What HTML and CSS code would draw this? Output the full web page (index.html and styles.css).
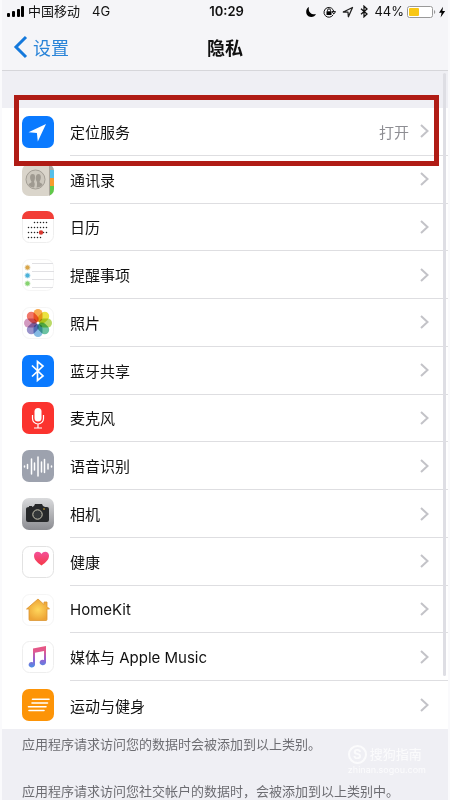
FILE: index.html
```html
<!DOCTYPE html>
<html lang="zh-CN">
<head>
    <meta charset="UTF-8">
    <meta name="viewport" content="width=device-width, initial-scale=1.0">
    <title>隐私</title>
    <link rel="stylesheet" href="styles.css">
</head>
<body>
    <svg class="defs" width="0" height="0">
        <symbol id="chevron" viewBox="0 0 9 14"><path d="M1 1l6.5 6L1 13"/></symbol>
    </svg>

    <div class="screen">
        <header class="header">
            <div class="status-bar">
                <div class="status-left">
                    <svg class="signal" width="18" height="11" viewBox="0 0 18 11">
                        <rect x="0" y="7" width="3" height="4" rx="1"/>
                        <rect x="5" y="5" width="3" height="6" rx="1"/>
                        <rect x="10" y="3" width="3" height="8" rx="1"/>
                        <rect x="14" y="0" width="3" height="11" rx="1"/>
                    </svg>
                    <span>中国移动</span>
                    <span class="network">4G</span>
                </div>
                <time class="clock">10:29</time>
                <div class="status-right">
                    <svg width="12" height="12" viewBox="0 0 12 12">
                        <path d="M4 1C-.3 3 .3 10.900 6.200 11c2.200 0 4-1.200 4.800-3C6.500 9.300 2.600 5.600 4 1z"/>
                    </svg>
                    <svg width="13" height="12" viewBox="0 0 13 12" class="lock">
                        <path d="M10.200 8.700a4.900 4.900 0 1 1 .6-2.700M9 5.600h3.600L10.800 8z" fill="none" stroke="#111"/>
                        <rect x="3.500" y="5.300" width="5" height="3.700"/>
                        <path d="M4.500 5.500V4.300a1.500 1.500 0 0 1 3 0v1.200" fill="none" stroke="#111"/>
                    </svg>
                    <svg width="12" height="12" viewBox="0 0 12 12">
                        <path d="M1.300 6L10.500 1.500 6.400 10.700 6 6.200z" fill="none" stroke="#222" stroke-width="1.300" stroke-linejoin="round"/>
                    </svg>
                    <svg width="8" height="13" viewBox="0 0 8 13">
                        <path d="M1 3.700l6 5.300-3 2.800V1.200L7 4 1 9.300" fill="none" stroke="#111" stroke-width="1.300"/>
                    </svg>
                    <span class="percent">44%</span>
                    <svg width="29" height="12" viewBox="0 0 29 12">
                        <rect x=".5" y=".5" width="25" height="11" rx="2" fill="#fff" stroke="#999"/>
                        <rect x="2" y="2" width="10" height="8" rx="1" fill="#f9c714"/>
                        <path d="M27 4v4a2.200 2.200 0 0 0 0-4z" fill="#999"/>
                    </svg>
                    <svg width="8" height="12" viewBox="0 0 8 12">
                        <path d="M5 .8L1 6.800h2.600L2.600 11.500 7.200 5H4.400z"/>
                    </svg>
                </div>
            </div>
            <nav class="nav">
                <a class="back" href="#">
                    <svg width="15" height="24" viewBox="0 0 15 24">
                        <path d="M13 2L3 12l10 10" fill="none" stroke="#1479dc" stroke-width="3"/>
                    </svg>
                    设置
                </a>
                <h1>隐私</h1>
            </nav>
        </header>

        <main class="content">
            <ul class="list">
                <li class="row highlighted">
                    <a href="#">
                        <svg class="icon" viewBox="0 0 32 32">
                            <rect width="32" height="32" rx="7" fill="#0a7aff"/>
                            <path d="M6.500 16.300L24 8l-8.200 17.500-.9-8.400z" fill="#fff"/>
                        </svg>
                        <span class="cell"><span>定位服务</span><span class="value">打开</span><svg class="chevron"><use href="#chevron"/></svg></span>
                    </a>
                </li>
                <li class="row">
                    <a href="#">
                        <svg class="icon" viewBox="0 0 32 32">
                            <defs><clipPath id="tile"><rect width="32" height="32" rx="7"/></clipPath></defs>
                            <g clip-path="url(#tile)">
                                <rect width="32" height="32" fill="#dad5cb"/>
                                <path d="M28 0h4v9h-4z" fill="#a9aba8"/>
                                <path d="M28 6h4v8h-4z" fill="#55bfe9"/>
                                <path d="M28 14h4v8h-4z" fill="#f79b2c"/>
                                <path d="M28 22h4v10h-4z" fill="#60c949"/>
                                <path d="M27.500 0v32" stroke="#aaa59c"/>
                                <circle cx="13.500" cy="15.500" r="9.500" fill="#cdc8be" stroke="#a39e95"/>
                                <path d="M6.500 20.500c1-1.500 3-1.500 3-3-2-2.500-2-7.500 1-7.500 2 0 2.500 1 2.500 3 0 3-1 4-1 5 1 1 1 3 0 5.500-2.500 0-4.500-1-5.500-3zM14.500 23.500c.8-2 .5-4 .5-5.500-2-3-1.500-8 1.500-8s3 5 1 7.500c0 1.500 2 1.500 3 3-1 2-3 3-6 3z" fill="#9f9a91"/>
                            </g>
                        </svg>
                        <span class="cell"><span>通讯录</span><svg class="chevron"><use href="#chevron"/></svg></span>
                    </a>
                </li>
                <li class="row">
                    <a href="#">
                        <svg class="icon" viewBox="0 0 32 32">
                            <rect x=".5" y=".5" width="31" height="31" rx="7" fill="#fff" stroke="#eee"/>
                            <path d="M0 8V7a7 7 0 0 1 7-7h18a7 7 0 0 1 7 7v1z" fill="#f23e37"/>
                            <g fill="none" stroke="#222" stroke-width="1.500" stroke-linecap="round" stroke-dasharray="0 3">
                                <path d="M12.500 11.500h13M6.500 16.500h19.500M6.500 21.500h19.500M6.500 26.500h13"/>
                            </g>
                            <circle cx="19" cy="21.500" r="2.200" fill="#d9382f"/>
                        </svg>
                        <span class="cell"><span>日历</span><svg class="chevron"><use href="#chevron"/></svg></span>
                    </a>
                </li>
                <li class="row">
                    <a href="#">
                        <svg class="icon" viewBox="0 0 32 32">
                            <rect x=".5" y=".5" width="31" height="31" rx="7" fill="#fff" stroke="#f5f5f5"/>
                            <path d="M10 4.500h21M10 12.500h22M10 20.500h22M10 28.500h21" stroke="#e0e0e3"/>
                            <circle cx="5.500" cy="8.500" r="2.500" fill="#d9a548" stroke="#ead9b8"/>
                            <circle cx="5.500" cy="16.500" r="2.500" fill="#4cb2d9" stroke="#b4deed"/>
                            <circle cx="5.500" cy="24.500" r="2.500" fill="#86d370" stroke="#c9ebc0"/>
                        </svg>
                        <span class="cell"><span>提醒事项</span><svg class="chevron"><use href="#chevron"/></svg></span>
                    </a>
                </li>
                <li class="row">
                    <a href="#">
                        <svg class="icon" viewBox="0 0 32 32">
                            <rect x=".5" y=".5" width="31" height="31" rx="7" fill="#fff" stroke="#f5f5f5"/>
                            <g class="petals">
                                <rect x="11.500" y="2" width="9" height="13" rx="4.500" fill="#f7a13d"/>
                                <rect x="11.500" y="2" width="9" height="13" rx="4.500" fill="#e8e02c" transform="rotate(45 16 16)"/>
                                <rect x="11.500" y="2" width="9" height="13" rx="4.500" fill="#b3d656" transform="rotate(90 16 16)"/>
                                <rect x="11.500" y="2" width="9" height="13" rx="4.500" fill="#5cbd98" transform="rotate(135 16 16)"/>
                                <rect x="11.500" y="2" width="9" height="13" rx="4.500" fill="#76b3e0" transform="rotate(180 16 16)"/>
                                <rect x="11.500" y="2" width="9" height="13" rx="4.500" fill="#8f88c6" transform="rotate(225 16 16)"/>
                                <rect x="11.500" y="2" width="9" height="13" rx="4.500" fill="#cf8fb9" transform="rotate(270 16 16)"/>
                                <rect x="11.500" y="2" width="9" height="13" rx="4.500" fill="#f0685a" transform="rotate(315 16 16)"/>
                            </g>
                            <circle cx="16" cy="16" r="1.300" fill="#fff"/>
                        </svg>
                        <span class="cell"><span>照片</span><svg class="chevron"><use href="#chevron"/></svg></span>
                    </a>
                </li>
                <li class="row">
                    <a href="#">
                        <svg class="icon" viewBox="0 0 32 32">
                            <rect width="32" height="32" rx="7" fill="#0a7aff"/>
                            <path d="M10 10.500l11 10.500-5.500 4.500v-19L21 11 10 21.500" fill="none" stroke="#fff" stroke-width="1.700"/>
                        </svg>
                        <span class="cell"><span>蓝牙共享</span><svg class="chevron"><use href="#chevron"/></svg></span>
                    </a>
                </li>
                <li class="row">
                    <a href="#">
                        <svg class="icon" viewBox="0 0 32 32">
                            <rect width="32" height="32" rx="7" fill="#fb332e"/>
                            <rect x="12.500" y="6" width="7" height="13.500" rx="3.500" fill="#fff"/>
                            <path d="M10.500 13v3.500a5.500 5.500 0 0 0 11 0V13M16 22v4M12 26h8" fill="none" stroke="#fff" stroke-width="1.200"/>
                        </svg>
                        <span class="cell"><span>麦克风</span><svg class="chevron"><use href="#chevron"/></svg></span>
                    </a>
                </li>
                <li class="row">
                    <a href="#">
                        <svg class="icon" viewBox="0 0 32 32">
                            <rect width="32" height="32" rx="7" fill="#9da2ae"/>
                            <path d="M2.500 16v1M5.500 14.500v4M9.500 9v15M12.500 13v7M16 7v19M19.500 12v10M22.500 9.500v13M26 14v5M29.500 16v1" stroke="#fff" stroke-width="1.500" stroke-linecap="round"/>
                        </svg>
                        <span class="cell"><span>语音识别</span><svg class="chevron"><use href="#chevron"/></svg></span>
                    </a>
                </li>
                <li class="row">
                    <a href="#">
                        <svg class="icon" viewBox="0 0 32 32">
                            <defs>
                                <linearGradient id="metal" x1="0" y1="0" x2="0" y2="1">
                                    <stop offset="0" stop-color="#dadbdd"/>
                                    <stop offset="1" stop-color="#8b8c91"/>
                                </linearGradient>
                            </defs>
                            <rect width="32" height="32" rx="7" fill="url(#metal)"/>
                            <path d="M4 11q0-2 3-2V8h3v1l2-1 1-2h7l1 2 2 1h2q2 0 2 2v11q0 2-2 2H6q-2 0-2-2z" fill="#26282a"/>
                            <circle cx="15.500" cy="16.500" r="4.700" fill="#333638" stroke="#cbc7b4"/>
                            <circle cx="22" cy="11" r=".8" fill="#e6b936"/>
                        </svg>
                        <span class="cell"><span>相机</span><svg class="chevron"><use href="#chevron"/></svg></span>
                    </a>
                </li>
                <li class="row">
                    <a href="#">
                        <svg class="icon" viewBox="0 0 32 32">
                            <defs>
                                <linearGradient id="heart" x1="0" y1="0" x2="0" y2="1">
                                    <stop offset="0" stop-color="#f4509a"/>
                                    <stop offset="1" stop-color="#f53846"/>
                                </linearGradient>
                            </defs>
                            <rect x=".5" y=".5" width="31" height="31" rx="7" fill="#fff" stroke="#e2e2e2"/>
                            <path d="M19.500 19.500C15 16.500 12 13.500 12 9.800 12 5 17.500 4.500 19.500 8c2-3.500 7.500-3 7.500 1.800 0 3.700-3 6.700-7.500 9.700z" fill="url(#heart)"/>
                        </svg>
                        <span class="cell"><span>健康</span><svg class="chevron"><use href="#chevron"/></svg></span>
                    </a>
                </li>
                <li class="row">
                    <a href="#">
                        <svg class="icon" viewBox="0 0 32 32">
                            <defs>
                                <radialGradient id="home">
                                    <stop offset="0" stop-color="#ffd75c"/>
                                    <stop offset="1" stop-color="#eda436"/>
                                </radialGradient>
                            </defs>
                            <rect x=".5" y=".5" width="31" height="31" rx="7" fill="#fff" stroke="#f5f5f5"/>
                            <path d="M16 5L4.500 15H7v10.500q0 1 1 1h16q1 0 1-1V15h2.500L25 12.500V8h-3v2.500z" fill="url(#home)" stroke="#dc9632" stroke-width=".8" stroke-linejoin="round"/>
                        </svg>
                        <span class="cell"><span>HomeKit</span><svg class="chevron"><use href="#chevron"/></svg></span>
                    </a>
                </li>
                <li class="row">
                    <a href="#">
                        <svg class="icon" viewBox="0 0 32 32">
                            <defs>
                                <linearGradient id="note" x1="0" y1="0" x2="0" y2="1">
                                    <stop offset="0" stop-color="#e85480"/>
                                    <stop offset=".25" stop-color="#e05a90"/>
                                    <stop offset=".6" stop-color="#9a5fd0"/>
                                    <stop offset="1" stop-color="#4b8ee6"/>
                                </linearGradient>
                            </defs>
                            <rect x=".5" y=".5" width="31" height="31" rx="7" fill="#fff" stroke="#eee"/>
                            <path d="M11 7.500L24 5v16.500a3.200 2.700 0 1 1-2-2.500v-9l-9 1.800v12a3.200 2.700 0 1 1-2-2.500z" fill="url(#note)"/>
                        </svg>
                        <span class="cell"><span>媒体与 Apple Music</span><svg class="chevron"><use href="#chevron"/></svg></span>
                    </a>
                </li>
                <li class="row">
                    <a href="#">
                        <svg class="icon" viewBox="0 0 32 32">
                            <rect width="32" height="32" rx="7" fill="#fd9407"/>
                            <path d="M10.500 10.300H27M10 14h15.500M6.500 17.800H24M7 21.500h15" stroke="#fff" stroke-width="1.600" stroke-linecap="round"/>
                        </svg>
                        <span class="cell"><span>运动与健身</span><svg class="chevron"><use href="#chevron"/></svg></span>
                    </a>
                </li>
            </ul>
            <div class="notes">
                <p>应用程序请求访问您的数据时会被添加到以上类别。</p>
                <p>应用程序请求访问您社交帐户的数据时，会被添加到以上类别中。</p>
            </div>
            <div class="scrollbar"></div>
            <div class="watermark">
                <div class="brand"><span class="brand-mark">S</span>搜狗指南</div>
                <div class="site">zhinan.sogou.com</div>
            </div>
        </main>
    </div>
</body>
</html>
```

FILE: styles.css
```css
* {
    margin: 0;
    padding: 0;
    box-sizing: border-box;
}

body {
    font-family: Inter, "Noto Sans CJK SC", sans-serif;
    font-size: 15px;
    color: #111;
    background: #fafafc;
}

a {
    color: inherit;
    text-decoration: none;
}

.defs {
    position: absolute;
}

.screen {
    display: flex;
    flex-direction: column;
    min-height: 100vh;
    padding: 0 2px;
}

/* Status bar and title */
.header {
    background: #f5f5f8;
    border-bottom: 1px solid #d6d6da;
}

.status-bar {
    display: grid;
    grid-template-columns: 1fr auto 1fr;
    align-items: center;
    height: 23px;
    padding: 0 2px 0 5px;
    font-size: 13px;
    line-height: 23px;
}

.status-left,
.status-right {
    display: flex;
    align-items: center;
}

.status-left {
    gap: 3px;
}

.network {
    margin-left: 9px;
}

.clock {
    font-weight: 600;
}

.status-right {
    justify-content: flex-end;
    gap: 6px;
}

.status-right svg:last-child {
    margin-left: -4px;
}

.percent {
    margin-right: -3px;
}

.nav {
    display: grid;
    grid-template-columns: 1fr auto 1fr;
    align-items: center;
    height: 47px;
    padding: 0 11px;
}

.back {
    display: flex;
    align-items: center;
    gap: 5px;
    font-size: 18px;
    color: #2a84d8;
}

.nav h1 {
    font-size: 18px;
    font-weight: 600;
}

/* Settings list */
.content {
    position: relative;
    flex: 1;
    padding-top: 37px;
    background: #efeff4;
}

.list {
    display: grid;
    grid-auto-rows: 1fr;
    min-height: 621px;
    list-style: none;
    background: #fff;
}

.row {
    position: relative;
}

.row a {
    display: flex;
    align-items: center;
    gap: 16px;
    height: 100%;
    padding-left: 20px;
}

.icon {
    flex: none;
    width: 32px;
    height: 32px;
}

.petals rect {
    mix-blend-mode: multiply;
    opacity: 0.9;
}

.cell {
    display: flex;
    flex: 1;
    align-items: center;
    height: 100%;
    padding-right: 19px;
    border-bottom: 1px solid #dedee1;
}

.row:last-child .cell {
    border-bottom: none;
}

.value {
    margin-left: auto;
    color: #8e8e93;
}

.chevron {
    width: 9px;
    height: 14px;
    margin-left: auto;
    fill: none;
    stroke: #c3c3c8;
    stroke-width: 2;
}

.value + .chevron {
    margin-left: 11px;
}

.highlighted::after {
    content: "";
    position: absolute;
    z-index: 1;
    top: -13px;
    right: 9px;
    bottom: -10px;
    left: 12px;
    border: 5px solid #b01c15;
    pointer-events: none;
}

.notes {
    display: grid;
    gap: 29px;
    padding: 6px 20px 0;
    font-size: 13px;
    line-height: 18px;
    color: #6d6d72;
}

.scrollbar {
    position: absolute;
    top: 2px;
    right: 2px;
    width: 3px;
    height: 603px;
    border-radius: 2px;
    background: #dedee4;
}

.watermark {
    position: absolute;
    top: 673px;
    right: 22px;
    color: #fff;
    opacity: 0.8;
}

.brand {
    display: flex;
    align-items: center;
    gap: 3px;
    font-size: 13px;
    line-height: 20px;
}

.brand-mark {
    width: 19px;
    height: 19px;
    border: 2px solid #fff;
    border-radius: 50%;
    font-weight: 700;
    line-height: 15px;
    text-align: center;
}

.site {
    font-size: 9px;
    line-height: 12px;
}
```
